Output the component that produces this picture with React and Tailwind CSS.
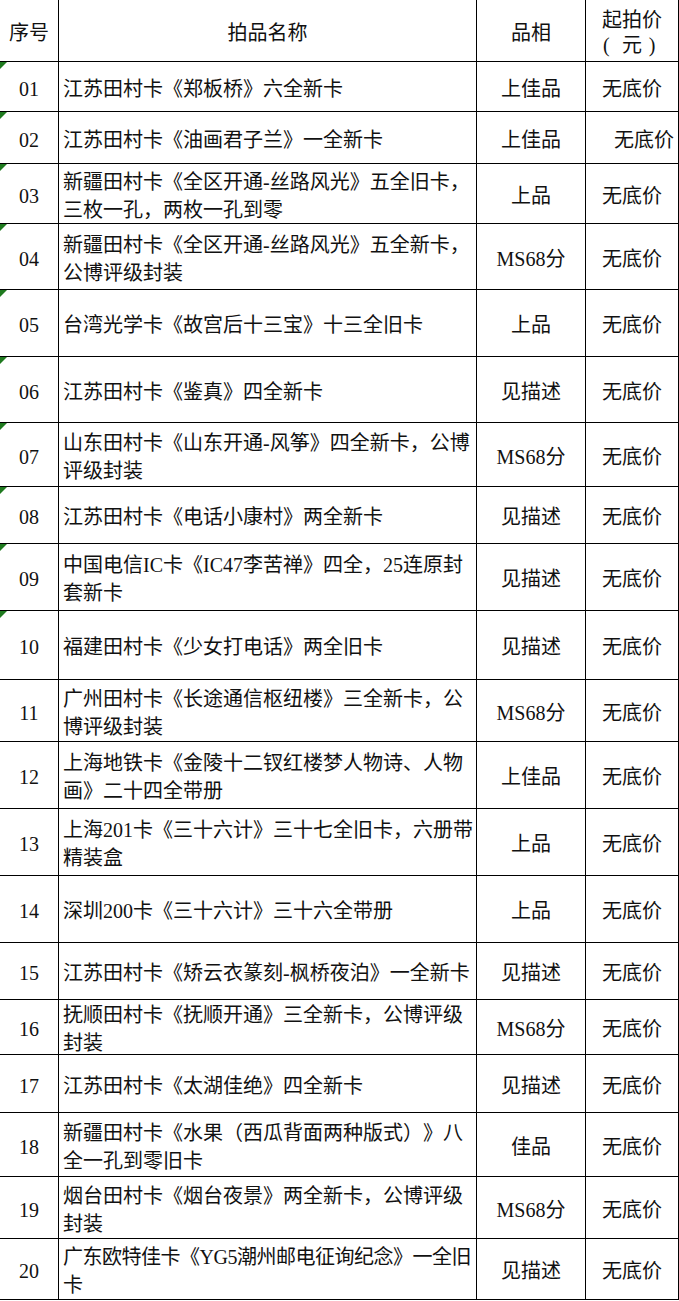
import React from "react";

const rows = [
  { no: "01", name: ["江苏田村卡《郑板桥》六全新卡"], grade: "上佳品", h: "h-[50px]", mark: true },
  { no: "02", name: ["江苏田村卡《油画君子兰》一全新卡"], grade: "上佳品", h: "h-[52px]", mark: true, priceRight: true },
  { no: "03", name: ["新疆田村卡《全区开通-丝路风光》五全旧卡，", "三枚一孔，两枚一孔到零"], grade: "上品", h: "h-[60px]", mark: true },
  { no: "04", name: ["新疆田村卡《全区开通-丝路风光》五全新卡，", "公博评级封装"], grade: "MS68分", h: "h-[66px]", mark: true },
  { no: "05", name: ["台湾光学卡《故宫后十三宝》十三全旧卡"], grade: "上品", h: "h-[67px]", mark: true },
  { no: "06", name: ["江苏田村卡《鉴真》四全新卡"], grade: "见描述", h: "h-[66px]", mark: true },
  { no: "07", name: ["山东田村卡《山东开通-风筝》四全新卡，公博", "评级封装"], grade: "MS68分", h: "h-[64px]", mark: true },
  { no: "08", name: ["江苏田村卡《电话小康村》两全新卡"], grade: "见描述", h: "h-[57px]", mark: true },
  { no: "09", name: ["中国电信IC卡《IC47李苦禅》四全，25连原封", "套新卡"], grade: "见描述", h: "h-[67px]", mark: true },
  { no: "10", name: ["福建田村卡《少女打电话》两全旧卡"], grade: "见描述", h: "h-[69px]", mark: true },
  { no: "11", name: ["广州田村卡《长途通信枢纽楼》三全新卡，公", "博评级封装"], grade: "MS68分", h: "h-[62px]" },
  { no: "12", name: ["上海地铁卡《金陵十二钗红楼梦人物诗、人物", "画》二十四全带册"], grade: "上佳品", h: "h-[67px]" },
  { no: "13", name: ["上海201卡《三十六计》三十七全旧卡，六册带", "精装盒"], grade: "上品", h: "h-[67px]" },
  { no: "14", name: ["深圳200卡《三十六计》三十六全带册"], grade: "上品", h: "h-[67px]" },
  { no: "15", name: ["江苏田村卡《矫云衣篆刻-枫桥夜泊》一全新卡"], grade: "见描述", h: "h-[57px]" },
  { no: "16", name: ["抚顺田村卡《抚顺开通》三全新卡，公博评级", "封装"], grade: "MS68分", h: "h-[55px]" },
  { no: "17", name: ["江苏田村卡《太湖佳绝》四全新卡"], grade: "见描述", h: "h-[58px]" },
  { no: "18", name: ["新疆田村卡《水果（西瓜背面两种版式）》八", "全一孔到零旧卡"], grade: "佳品", h: "h-[64px]" },
  { no: "19", name: ["烟台田村卡《烟台夜景》两全新卡，公博评级", "封装"], grade: "MS68分", h: "h-[62px]" },
  { no: "20", name: ["广东欧特佳卡《YG5潮州邮电征询纪念》一全旧", "卡"], grade: "见描述", h: "h-[61px]", tight: true },
];

function Mark() {
  return (
    <svg className="absolute left-0 top-0" width="7" height="7" viewBox="0 0 7 7">
      <polygon points="0,0 7,0 0,7" fill="#1f7a1f" />
    </svg>
  );
}

export default function App() {
  return (
    <div
      className="w-[679px] h-[1301px] bg-white text-[#111] text-[20px] leading-[28px] [text-spacing-trim:space-all]"
      style={{ fontFamily: '"Liberation Serif", "Noto Sans CJK SC", serif' }}
    >
      <div className="grid grid-cols-[59px_418px_109px_93px] h-[62px]">
        <div className="border-r border-b border-black flex items-center justify-center pt-1">序号</div>
        <div className="border-r border-b border-black flex items-center justify-center pt-1">拍品名称</div>
        <div className="border-r border-b border-black flex items-center justify-center pt-1">品相</div>
        <div className="border-r border-b border-black flex flex-col items-center justify-center leading-[25px] pt-1">
          <span>起拍价</span>
          <span className="flex">
            <span className="w-[20px] text-left pl-[1px]">(</span>
            <span>元</span>
            <span className="w-[20px] text-center">)</span>
          </span>
        </div>
      </div>
      {rows.map((r) => (
        <div key={r.no} className={"grid grid-cols-[59px_418px_109px_93px] " + r.h}>
          <div className="relative border-r border-b border-black flex items-center justify-center pt-1">
            {r.mark && <Mark />}
            {r.no}
          </div>
          <div
            className={
              "border-r border-b border-black flex flex-col justify-center pl-1 pt-1 whitespace-nowrap overflow-hidden " +
              (r.tight ? "tracking-[-0.5px]" : "")
            }
          >
            {r.name.map((l, i) => (
              <span key={i}>{l}</span>
            ))}
          </div>
          <div className="border-r border-b border-black flex items-center justify-center pt-1 whitespace-nowrap">
            {r.grade}
          </div>
          <div
            className={
              "border-r border-b border-black flex items-center pt-1 whitespace-nowrap " +
              (r.priceRight ? "justify-end pr-1" : "justify-center")
            }
          >
            无底价
          </div>
        </div>
      ))}
    </div>
  );
}
